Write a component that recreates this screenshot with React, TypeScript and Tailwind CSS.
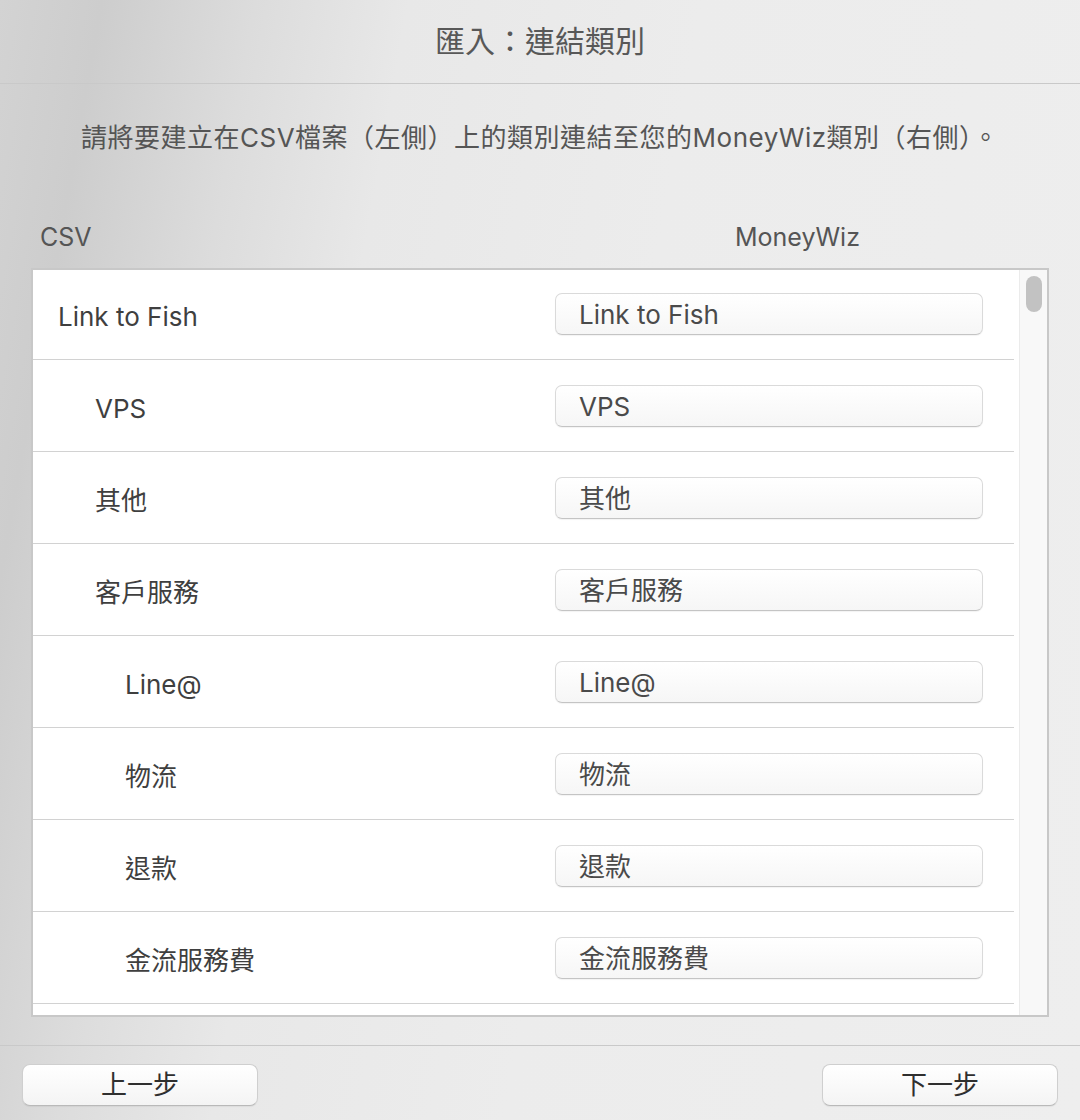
import React from 'react';

interface CategoryRow {
  name: string;
  level: number;
}

const rows: CategoryRow[] = [
  { name: 'Link to Fish', level: 0 },
  { name: 'VPS', level: 1 },
  { name: '其他', level: 1 },
  { name: '客戶服務', level: 1 },
  { name: 'Line@', level: 2 },
  { name: '物流', level: 2 },
  { name: '退款', level: 2 },
  { name: '金流服務費', level: 2 },
];

const indentClass = ['pl-[25px]', 'pl-[62px]', 'pl-[92px]'];

const font = { fontFamily: 'Inter, "Noto Sans CJK TC", "Noto Sans", sans-serif' };

const MappingRow: React.FC<{ row: CategoryRow }> = ({ row }) => (
  <div className="flex h-[92px] shrink-0 items-center border-b border-[#d2d2d2]">
    <div className={`w-[522px] text-[26px] leading-none text-[#3f3f3f] pt-[6px] ${indentClass[row.level]}`}>
      {row.name}
    </div>
    <div className="flex h-[42px] w-[428px] items-center rounded-[7px] border border-[#dadada] border-b-[#c4c4c4] bg-gradient-to-b from-white to-[#f6f6f6] pl-[23px] pt-[3px] text-[26px] leading-none text-[#4a4a4a] shadow-[0_1px_1px_rgba(0,0,0,0.05)]">
      {row.name}
    </div>
  </div>
);

const FooterButton: React.FC<{ label: string }> = ({ label }) => (
  <button className="flex h-[42px] w-[236px] items-center justify-center rounded-[8px] border border-[#cfcfcf] border-b-[#b9b9b9] bg-gradient-to-b from-white to-[#f4f4f4] text-[26px] leading-none text-[#2f2f2f] shadow-[0_1px_1px_rgba(0,0,0,0.05)]">
    {label}
  </button>
);

export default function App() {
  return (
    <div
      className="flex h-[1120px] w-[1080px] flex-col overflow-hidden bg-[linear-gradient(100deg,#d3d3d3_0%,#cdcdcd_8%,#dcdcdc_20%,#e8e8e8_32%,#ececec_55%,#eeeeee_100%)]"
      style={font}
    >
      {/* title bar */}
      <div className="flex h-[84px] shrink-0 items-center justify-center border-b border-[#c9c9c9] pb-[2px] text-[30px] leading-none text-[#585858]">
        匯入：連結類別
      </div>

      <div className="flex h-[108px] shrink-0 items-center justify-center text-[26px] leading-none tracking-[0.5px] text-[#555555]">
        請將要建立在CSV檔案（左側）上的類別連結至您的MoneyWiz類別（右側）。
      </div>

      <div className="flex h-[76px] shrink-0 pt-[32px] text-[25px] leading-[26px] text-[#555555]">
        <div className="w-[735px] pl-[40px]">CSV</div>
        <div>MoneyWiz</div>
      </div>

      {/* mapping table */}
      <div className="mx-[31px] flex h-[749px] w-[1018px] shrink-0 overflow-hidden border-2 border-[#c8c8c8] bg-white">
        <div className="mr-[5px] flex flex-1 flex-col overflow-hidden">
          <div className="-mt-[2px] flex flex-col">
            {rows.map((row) => (
              <MappingRow key={row.name} row={row} />
            ))}
          </div>
        </div>
        <div className="w-[28px] shrink-0 border-l border-[#ebebeb] bg-[#f8f8f8] pl-[6px] pt-[6px]">
          <div className="h-[36px] w-[16px] rounded-full bg-[#c2c2c2]" />
        </div>
      </div>

      <div className="mt-[28px] border-t border-[#c9c9c9]" />

      <div className="flex justify-between px-[22px] pt-[18px]">
        <FooterButton label="上一步" />
        <FooterButton label="下一步" />
      </div>
    </div>
  );
}
